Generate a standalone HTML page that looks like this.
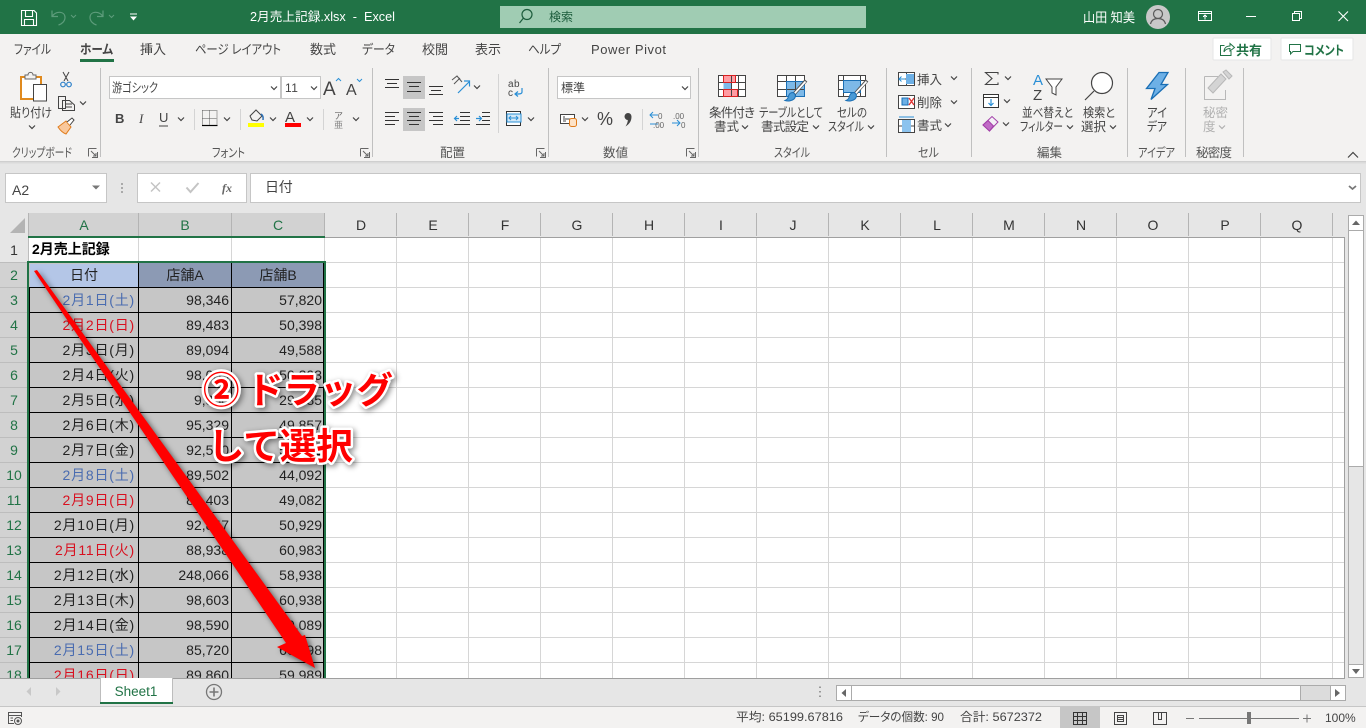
<!DOCTYPE html>
<html lang="ja"><head><meta charset="utf-8"><title>2月売上記録.xlsx - Excel</title>
<style>
html,body{margin:0;padding:0;background:#e6e6e6;overflow:hidden}
svg{display:block;position:absolute;left:0;top:0}
text{font-family:"Liberation Sans","Noto Sans CJK JP",sans-serif;font-size:12px;fill:#444}
.tab{font-size:13px;fill:#444;font-feature-settings:"palt"}
.lb{font-size:12.5px;fill:#444;font-feature-settings:"palt"}
.gl{font-size:12.5px;fill:#555;font-feature-settings:"palt"}
.ch{font-size:14px;fill:#333;text-anchor:middle}
.cs{font-size:14px;fill:#217346;text-anchor:middle}
.rh{font-size:14px;fill:#217346;text-anchor:middle}
.n{font-size:14px;fill:#222;text-anchor:end}
.d{font-size:14px;fill:#222;text-anchor:end;letter-spacing:.8px}
.b{fill:#4a6cb0}.r{fill:#d8101f}
.hd{font-size:14px;fill:#222;text-anchor:middle}
.st{font-size:12px;fill:#444;font-feature-settings:"palt"}
.big{font-size:36.5px;font-weight:700;fill:#f00;stroke:#fff;stroke-width:5px;paint-order:stroke;stroke-linejoin:round;font-family:"Noto Sans CJK JP","Liberation Sans",sans-serif}
.i{fill:none;stroke:#444;stroke-width:1}
.l{fill:none;stroke:#333;stroke-width:1;shape-rendering:crispEdges}
</style></head><body>
<svg width="1366" height="728" viewBox="0 0 1366 728" xmlns="http://www.w3.org/2000/svg">
<defs>
<path id="c" d="M-3-1.5 0 1.5 3-1.5" fill="none" stroke="#444" stroke-width="1.2"/>
<path id="dl" d="M-4.5-4.5H3.5M-4.5-4.5V3.5M-2-2 3 3M3 0V3H0M4.5-1V4.500H-1" fill="none" stroke="#666" stroke-width="1"/>
</defs>

<!-- sheet background -->
<rect x="0" y="0" width="1366" height="728" fill="#e6e6e6"/>
<rect x="29" y="237" width="1315" height="441" fill="#fff"/>

<!-- grid lines -->
<path d="M396.5 213V678M468.5 213V678M540.5 213V678M612.5 213V678M684.5 213V678M756.5 213V678M828.5 213V678M900.5 213V678M972.5 213V678M1044.5 213V678M1116.5 213V678M1188.5 213V678M1260.5 213V678M1332.5 213V678M325 262.5H1344M325 287.5H1344M325 312.5H1344M325 337.5H1344M325 362.5H1344M325 387.5H1344M325 412.5H1344M325 437.5H1344M325 462.5H1344M325 487.5H1344M325 512.5H1344M325 537.5H1344M325 562.5H1344M325 587.5H1344M325 612.5H1344M325 637.5H1344M325 662.5H1344M138.5 237V262M231.5 237V262M324.5 237V262" stroke="#d6d6d6" stroke-width="1" shape-rendering="crispEdges"/>

<!-- selected cells -->
<rect x="29" y="262" width="296" height="416" fill="#c6c6c6"/>
<rect x="30" y="264" width="109" height="23" fill="#b4c6e7"/>
<rect x="139" y="263" width="185" height="24" fill="#8c9ab4"/>
<path d="M29.5 287V678M138.5 263V678M231.5 263V678M323.5 263V678M29 287.5H324M29 312.5H324M29 337.5H324M29 362.5H324M29 387.5H324M29 412.5H324M29 437.5H324M29 462.5H324M29 487.5H324M29 512.5H324M29 537.5H324M29 562.5H324M29 587.5H324M29 612.5H324M29 637.5H324M29 662.5H324" stroke="#000" stroke-width="1" shape-rendering="crispEdges"/>

<!-- column headers -->
<rect x="0" y="213" width="1345" height="24" fill="#e6e6e6"/>
<rect x="29" y="213" width="296" height="24" fill="#d2d2d2"/>
<path d="M25 218V233H10Z" fill="#b4b4b4"/>
<path d="M28.5 213V237M138.5 213V236M231.5 213V236M324.5 213V236M396.5 213V236M468.5 213V236M540.5 213V236M612.5 213V236M684.5 213V236M756.5 213V236M828.5 213V236M900.5 213V236M972.5 213V236M1044.5 213V236M1116.5 213V236M1188.5 213V236M1260.5 213V236M1332.5 213V236" stroke="#b4b4b4" stroke-width="1" shape-rendering="crispEdges"/>
<path d="M325 237.5H1344.5V678M0 237.5H29" stroke="#a0a0a0" fill="none" stroke-width="1" shape-rendering="crispEdges"/>
<text class="cs" x="84" y="230">A</text><text class="cs" x="185" y="230">B</text><text class="cs" x="278" y="230">C</text>
<text class="ch" x="361" y="230">D</text><text class="ch" x="433" y="230">E</text><text class="ch" x="505" y="230">F</text><text class="ch" x="577" y="230">G</text><text class="ch" x="649" y="230">H</text><text class="ch" x="721" y="230">I</text><text class="ch" x="793" y="230">J</text><text class="ch" x="865" y="230">K</text><text class="ch" x="937" y="230">L</text><text class="ch" x="1009" y="230">M</text><text class="ch" x="1081" y="230">N</text><text class="ch" x="1153" y="230">O</text><text class="ch" x="1225" y="230">P</text><text class="ch" x="1297" y="230">Q</text>

<!-- row headers -->
<rect x="0" y="237" width="28" height="441" fill="#e6e6e6"/>
<rect x="0" y="262" width="28" height="416" fill="#d2d2d2"/>
<path d="M0 262.5H28M0 287.5H28M0 312.5H28M0 337.5H28M0 362.5H28M0 387.5H28M0 412.5H28M0 437.5H28M0 462.5H28M0 487.5H28M0 512.5H28M0 537.5H28M0 562.5H28M0 587.5H28M0 612.5H28M0 637.5H28M0 662.5H28M28.5 237V678" stroke="#bdbdbd" stroke-width="1" shape-rendering="crispEdges"/>
<text class="ch" x="14" y="255">1</text>
<text class="rh" x="14" y="280">2</text><text class="rh" x="14" y="305">3</text><text class="rh" x="14" y="330">4</text><text class="rh" x="14" y="355">5</text><text class="rh" x="14" y="380">6</text><text class="rh" x="14" y="405">7</text><text class="rh" x="14" y="430">8</text><text class="rh" x="14" y="455">9</text><text class="rh" x="14" y="480">10</text><text class="rh" x="14" y="505">11</text><text class="rh" x="14" y="530">12</text><text class="rh" x="14" y="555">13</text><text class="rh" x="14" y="580">14</text><text class="rh" x="14" y="605">15</text><text class="rh" x="14" y="630">16</text><text class="rh" x="14" y="655">17</text><text class="rh" x="14" y="680">18</text>

<!-- cells -->
<text x="32" y="254" style="font-size:14px;font-weight:700;fill:#000">2月売上記録</text>
<text class="hd" x="84" y="280">日付</text><text class="hd" x="185" y="280">店舗A</text><text class="hd" x="278" y="280">店舗B</text>

<text class="d b" x="135" y="305">2月1日(土)</text><text class="n" x="229" y="305">98,346</text><text class="n" x="322" y="305">57,820</text>
<text class="d r" x="135" y="330">2月2日(日)</text><text class="n" x="229" y="330">89,483</text><text class="n" x="322" y="330">50,398</text>
<text class="d" x="135" y="355">2月3日(月)</text><text class="n" x="229" y="355">89,094</text><text class="n" x="322" y="355">49,588</text>
<text class="d" x="135" y="380">2月4日(火)</text><text class="n" x="229" y="380">98,053</text><text class="n" x="322" y="380">50,203</text>
<text class="d" x="135" y="405">2月5日(水)</text><text class="n" x="229" y="405">9,830</text><text class="n" x="322" y="405">29,385</text>
<text class="d" x="135" y="430">2月6日(木)</text><text class="n" x="229" y="430">95,329</text><text class="n" x="322" y="430">49,857</text>
<text class="d" x="135" y="455">2月7日(金)</text><text class="n" x="229" y="455">92,530</text><text class="n" x="322" y="455">50,392</text>
<text class="d b" x="135" y="480">2月8日(土)</text><text class="n" x="229" y="480">89,502</text><text class="n" x="322" y="480">44,092</text>
<text class="d r" x="135" y="505">2月9日(日)</text><text class="n" x="229" y="505">89,403</text><text class="n" x="322" y="505">49,082</text>
<text class="d" x="135" y="530">2月10日(月)</text><text class="n" x="229" y="530">92,847</text><text class="n" x="322" y="530">50,929</text>
<text class="d r" x="135" y="555">2月11日(火)</text><text class="n" x="229" y="555">88,938</text><text class="n" x="322" y="555">60,983</text>
<text class="d" x="135" y="580">2月12日(水)</text><text class="n" x="229" y="580">248,066</text><text class="n" x="322" y="580">58,938</text>
<text class="d" x="135" y="605">2月13日(木)</text><text class="n" x="229" y="605">98,603</text><text class="n" x="322" y="605">60,938</text>
<text class="d" x="135" y="630">2月14日(金)</text><text class="n" x="229" y="630">98,590</text><text class="n" x="322" y="630">60,089</text>
<text class="d b" x="135" y="655">2月15日(土)</text><text class="n" x="229" y="655">85,720</text><text class="n" x="322" y="655">60,398</text>
<text class="d r" x="135" y="680">2月16日(日)</text><text class="n" x="229" y="680">89,860</text><text class="n" x="322" y="680">59,989</text>

<!-- selection outline -->
<path d="M28 237H325" stroke="#217346" stroke-width="2"/>
<path d="M28 262H325M28 261V678M325 261V678" stroke="#217346" stroke-width="2" fill="none"/>

<!-- annotation arrow -->
<polygon points="34,271 37,270 302,636 305,635 315,668 277,647 286,643" fill="#f00" style="filter:drop-shadow(3px 3px 3px rgba(0,0,0,.55))"/>
<g style="filter:drop-shadow(2px 2px 3px rgba(0,0,0,.45))">
<text class="big" x="203" y="403">②</text>
<text class="big" x="247" y="403">ドラッグ</text>
<text class="big" x="208" y="459">して選択</text>
</g>

<!-- bottom chrome -->
<rect x="0" y="678" width="1366" height="28" fill="#e6e6e6"/>
<path d="M0 678.5H1345" stroke="#9f9f9f" shape-rendering="crispEdges"/>
<rect x="100" y="678" width="73" height="25" fill="#fff"/>
<path d="M100.5 678V703M172.5 678V703" stroke="#bdbdbd" shape-rendering="crispEdges"/>
<rect x="100" y="702" width="73" height="2" fill="#217346"/>
<text x="136" y="696" text-anchor="middle" style="font-size:13.500px;fill:#217346">Sheet1</text>
<path d="M31 687V696L26.500 691.500Z" fill="#c8c8c8"/><path d="M56 687V696L60.500 691.500Z" fill="#c8c8c8"/>
<circle cx="214" cy="692" r="7.500" fill="none" stroke="#777" stroke-width="1.300"/><path d="M209.500 692H218.500M214 687.500V696.500" stroke="#777" stroke-width="1.600"/>
<path d="M820 686.500V688M820 691V692.500M820 695.500V697" stroke="#999" stroke-width="2"/>
<rect x="836.500" y="685.500" width="509" height="15" fill="#dcdcdc" stroke="#ababab" shape-rendering="crispEdges"/>
<rect x="851" y="686" width="449" height="14" fill="#fff"/>
<path d="M851.500 686V700M1300.500 686V700" stroke="#ababab" shape-rendering="crispEdges"/>
<rect x="837" y="686" width="14" height="14" fill="#fff"/><rect x="1330" y="686" width="15" height="14" fill="#fff"/><path d="M1330.500 686V700" stroke="#ababab" shape-rendering="crispEdges"/>
<path d="M846 689V697L841.500 693Z" fill="#666"/><path d="M1335 689V697L1340 693Z" fill="#666"/>

<!-- vertical scrollbar -->
<rect x="1348.500" y="215.500" width="15" height="462" fill="#e6e6e6" stroke="#ababab" shape-rendering="crispEdges"/>
<rect x="1349" y="216" width="14" height="14" fill="#fff"/>
<rect x="1349" y="231" width="14" height="235" fill="#fff"/>
<rect x="1349" y="665" width="14" height="12" fill="#fff"/>
<path d="M1349 230.500H1363M1349 466.500H1363M1349 664.500H1363" stroke="#ababab" shape-rendering="crispEdges"/>
<path d="M1352 225 1356 220.500 1360 225Z" fill="#666"/><path d="M1352 669 1356 674 1360 669Z" fill="#666"/>

<!-- status bar -->
<rect x="0" y="707" width="1366" height="21" fill="#f3f2f1"/>
<path d="M0 706.500H1366" stroke="#c6c6c6" shape-rendering="crispEdges"/>
<path d="M8.500 712.500H21.500V715.500H8.500ZM8.500 715.500V723.500H14M21.500 715.500V717M10.500 718H13M10.500 720.500H13" fill="none" stroke="#555" shape-rendering="crispEdges"/><circle cx="18" cy="721" r="3.500" fill="none" stroke="#555"/><circle cx="18" cy="721" r="1.500" fill="#555"/>
<text class="st" x="736" y="721" textLength="107" lengthAdjust="spacingAndGlyphs">平均: 65199.67816</text>
<text class="st" x="858" y="721" textLength="86" lengthAdjust="spacingAndGlyphs">データの個数: 90</text>
<text class="st" x="960" y="721" textLength="82" lengthAdjust="spacingAndGlyphs">合計: 5672372</text>
<rect x="1060" y="707" width="40" height="21" fill="#c6c6c6"/>
<path d="M1073.500 712.500H1086.500V724.500H1073.500ZM1073.500 716.500H1086.500M1073.500 720.500H1086.500M1077.500 712.500V724.500M1082.500 712.500V724.500" fill="none" stroke="#333" shape-rendering="crispEdges"/>
<path d="M1114.500 712.500H1126.500V724.500H1114.500ZM1117.500 715.500H1123.500V721.500H1117.500ZM1118 717.500H1123M1118 719.500H1123" fill="none" stroke="#444" shape-rendering="crispEdges"/>
<path d="M1153.500 712.500H1166.500V724.500H1153.500ZM1158.500 712.500V719.500H1161.500V712.500" fill="none" stroke="#444" shape-rendering="crispEdges"/>
<path d="M1186 718.500H1194M1199 718.500H1299M1303 718.500H1311M1307 714.500V722.500" stroke="#777" shape-rendering="crispEdges"/>
<rect x="1247" y="712" width="4" height="12" fill="#777"/>
<text class="st" x="1325" y="722">100%</text>

<!-- ribbon -->
<rect x="0" y="34" width="1366" height="127" fill="#f3f2f1"/>
<rect x="0" y="161" width="1366" height="1" fill="#cfcfcf"/><rect x="0" y="162" width="1366" height="1" fill="#dadada"/><rect x="0" y="163" width="1366" height="1" fill="#e0e0e0"/>

<!-- title bar -->
<rect x="0" y="0" width="1366" height="34" fill="#217346"/>
<path d="M21.500 10.500H34L36.500 13V25.500H21.500ZM25.500 10.500V16.500H32.500V10.500M24.500 25.500V19.500H33.500V25.500" fill="none" stroke="#fff" stroke-width="1.100"/>
<path d="M52 10.500V16.500H58M52 16.500C56 10.500 65 11 65 17.500C65 21 62 24 58.500 25" fill="none" stroke="#5d9c7b" stroke-width="1.200"/>
<path d="M103 10.500V16.500H97M103 16.500C99 10.500 90 11 90 17.500C90 21 93 24 96.500 25" fill="none" stroke="#5d9c7b" stroke-width="1.200"/>
<path d="M71 15 73.500 17.500 76 15M109 15 111.500 17.500 114 15" fill="none" stroke="#5d9c7b"/>
<path d="M130 14H137" stroke="#fff"/><path d="M130 16.500H137L133.500 20.500Z" fill="#fff"/>
<text x="250" y="21" textLength="145" lengthAdjust="spacingAndGlyphs" style="font-size:12.500px;fill:#fff">2月売上記録.xlsx&#160;&#160;-&#160;&#160;Excel</text>
<rect x="500" y="6" width="366" height="22" fill="#a0ccb3"/>
<circle cx="527" cy="14.500" r="5" fill="none" stroke="#1c5c3c" stroke-width="1.200"/><path d="M523.500 18 519.500 23" stroke="#1c5c3c" stroke-width="1.200"/>
<text x="549" y="21" style="fill:#1c5c3c">検索</text>
<text x="1083" y="22" textLength="52" lengthAdjust="spacingAndGlyphs" style="font-size:13px;fill:#fff">山田 知美</text>
<circle cx="1158" cy="17" r="12" fill="#c8c8c8"/><circle cx="1158" cy="14" r="4.500" fill="none" stroke="#5a5a5a" stroke-width="1.200"/><path d="M1150.500 24C1151.500 19.500 1155 18.500 1158 18.500S1164.500 19.500 1165.500 24" fill="none" stroke="#5a5a5a" stroke-width="1.200"/>
<path d="M1198.500 11.500H1211.500V20.500H1198.500ZM1198.500 13.500H1211.500M1205 19.500V15M1203 17 1205 15 1207 17" fill="none" stroke="#fff" shape-rendering="crispEdges"/>
<path d="M1246 16.500H1256" stroke="#fff" shape-rendering="crispEdges"/>
<path d="M1292.500 13.500H1299.500V20.500H1292.500ZM1294.500 13.500V11.500H1301.500V18.500H1299.500" fill="none" stroke="#fff" shape-rendering="crispEdges"/>
<path d="M1338.500 11.500 1348 21M1348 11.500 1338.500 21" stroke="#fff" stroke-width="1.100"/>

<!-- tabs -->
<text class="tab" x="14" y="54" textLength="37" lengthAdjust="spacingAndGlyphs">ファイル</text>
<text class="tab" x="80" y="54" textLength="33" lengthAdjust="spacingAndGlyphs" style="font-weight:700">ホーム</text>
<rect x="80" y="59" width="34" height="3" fill="#217346"/>
<text class="tab" x="140" y="54" textLength="26">挿入</text>
<text class="tab" x="195" y="54" textLength="86" lengthAdjust="spacingAndGlyphs">ページ レイアウト</text>
<text class="tab" x="310" y="54" textLength="26">数式</text>
<text class="tab" x="362" y="54" textLength="33" lengthAdjust="spacingAndGlyphs">データ</text>
<text class="tab" x="422" y="54" textLength="26">校閲</text>
<text class="tab" x="475" y="54" textLength="26">表示</text>
<text class="tab" x="528" y="54" textLength="33" lengthAdjust="spacingAndGlyphs">ヘルプ</text>
<text class="tab" x="591" y="54" textLength="75">Power Pivot</text>

<!-- share/comment -->
<rect x="1213" y="38" width="58" height="22" rx="1" fill="#fff" stroke="#e6e6e6"/>
<path d="M1224.500 45.500H1220.500V55.500H1231V51M1224 52C1224 47.500 1227 46 1230 46V43.500L1234.500 47.500 1230 51V48.500C1228 48.500 1225.500 49 1224 52" fill="none" stroke="#217346"/>
<text x="1236" y="55" style="font-size:13px;font-weight:700;fill:#217346">共有</text>
<rect x="1281" y="38" width="72" height="22" rx="1" fill="#fff" stroke="#e6e6e6"/>
<path d="M1289.500 44.500H1300.500V51.500H1293L1290.500 54V51.500H1289.500Z" fill="none" stroke="#217346"/>
<text x="1304" y="55" textLength="40" lengthAdjust="spacingAndGlyphs" style="font-size:13px;font-weight:700;fill:#217346;font-feature-settings:'palt'">コメント</text>

<!-- separators -->
<path d="M100.500 68V157M372.500 68V157M548.500 68V157M698.500 68V157M886.500 68V157M971.500 68V157M1127.500 68V157M1185.500 68V157M1243.500 68V157" stroke="#c0c0c0" shape-rendering="crispEdges"/>
<path d="M194.500 109V130M240.500 109V130M323.500 109V130M498.500 74V133M642.500 109V130" stroke="#d4d4d4" shape-rendering="crispEdges"/>

<!-- group labels -->
<text class="gl" x="12" y="157" textLength="60" lengthAdjust="spacingAndGlyphs">クリップボード</text>
<text class="gl" x="212" y="157" textLength="33" lengthAdjust="spacingAndGlyphs">フォント</text>
<text class="gl" x="440" y="157">配置</text>
<text class="gl" x="603" y="157">数値</text>
<text class="gl" x="774" y="157" textLength="36" lengthAdjust="spacingAndGlyphs">スタイル</text>
<text class="gl" x="918" y="157" textLength="21" lengthAdjust="spacingAndGlyphs">セル</text>
<text class="gl" x="1037" y="157">編集</text>
<text class="gl" x="1138" y="157" textLength="37" lengthAdjust="spacingAndGlyphs">アイデア</text>
<text class="gl" x="1196" y="157" textLength="36">秘密度</text>
<use href="#dl" x="93" y="153"/><use href="#dl" x="365" y="153"/><use href="#dl" x="541" y="153"/><use href="#dl" x="691" y="153"/>
<path d="M1348 157.500 1353 152.500 1358 157.500" fill="none" stroke="#444" stroke-width="1.200"/>

<!-- clipboard -->
<rect x="21" y="77" width="20" height="22" fill="#fff" stroke="#e08a1e" stroke-width="2"/>
<path d="M25 79V75H28C28 71.500 33 71.500 33 75H36V79Z" fill="#f3f2f1" stroke="#666"/>
<rect x="33.500" y="84.500" width="13" height="16.500" fill="#fff" stroke="#444"/>
<text class="lb" x="10" y="117" textLength="42" lengthAdjust="spacingAndGlyphs">貼り付け</text>
<use href="#c" x="32" y="127"/>
<path d="M63 72 68 81M69 72 64 81" stroke="#444" fill="none"/><circle cx="63" cy="84.500" r="2.300" fill="none" stroke="#2a7fc9" stroke-width="1.200"/><circle cx="69" cy="84.500" r="2.300" fill="none" stroke="#2a7fc9" stroke-width="1.200"/>
<path d="M58.500 96.500H65.500V108.500H58.500ZM62.500 100.500H69.500L74.500 105V110.500H62.500ZM65 104H72M65 107H72" fill="#f3f2f1" stroke="#444"/>
<use href="#c" x="83" y="103"/>
<path d="M58 127 66 121 71 127 66 134C63 133 60 130 58 127Z" fill="#f9c89c" stroke="#e07b1a"/><path d="M67 122 72 118 74 120 70 125" fill="#fff" stroke="#444"/>

<!-- font -->
<rect x="109.500" y="76.500" width="171" height="22" fill="#fff" stroke="#c6c6c6" shape-rendering="crispEdges"/>
<rect x="281.500" y="76.500" width="39" height="22" fill="#fff" stroke="#c6c6c6" shape-rendering="crispEdges"/>
<text x="112" y="92" textLength="46" lengthAdjust="spacingAndGlyphs" style="font-size:12.500px;fill:#444;font-feature-settings:'palt'">游ゴシック</text>
<text x="285" y="92" style="font-size:12px;letter-spacing:.5px">11</text>
<use href="#c" x="274" y="88"/><use href="#c" x="314" y="88"/>
<text x="323" y="95" style="font-size:19px;fill:#444">A</text><path d="M336 81 338.500 78.500 341 81" fill="none" stroke="#2a8fd6"/>
<text x="346" y="95" style="font-size:16px;fill:#444">A</text><path d="M357 79 359.500 81.500 362 79" fill="none" stroke="#2a8fd6"/>
<text x="115" y="123" style="font-size:13px;font-weight:700;fill:#444">B</text>
<text x="139" y="123" style="font-size:13px;font-style:italic;font-family:'Liberation Serif',serif;fill:#444">I</text>
<text x="159" y="122" style="font-size:13px;fill:#444">U</text><path d="M159 126H168" stroke="#444"/>
<use href="#c" x="181" y="119"/>
<path d="M202.500 110.500H217M202.500 118.500H217M209.500 110.500V125M202.500 110.500V125M217 110.500V125" fill="none" stroke="#555" stroke-dasharray="1 1" shape-rendering="crispEdges"/><path d="M202 125.500H217.500" stroke="#000" stroke-width="1.200"/>
<use href="#c" x="227" y="119"/>
<path d="M250 116 256 110 262 116 257 121 252 120Z" fill="none" stroke="#444"/><path d="M261 114C264 116 263 119 263 120" fill="none" stroke="#2a6fb5" stroke-width="1.500"/>
<rect x="248" y="123" width="16" height="4" fill="#ff0"/>
<use href="#c" x="273" y="119"/>
<text x="285" y="122" style="font-size:15px;fill:#444">A</text><rect x="285" y="123" width="16" height="4" fill="#f00"/>
<use href="#c" x="310" y="119"/>
<text x="334" y="119" style="font-size:9px;fill:#666">ア</text><text x="334" y="128" style="font-size:9px;fill:#888">亜</text>
<use href="#c" x="356" y="119"/>

<!-- alignment -->
<rect x="403" y="76" width="22" height="23" fill="#c6c6c6"/><rect x="403" y="108" width="22" height="23" fill="#c6c6c6"/>
<path class="l" d="M385 79.500H399M387 83.500H397M385 87.500H399M407 82.500H421M409 86.500H419M407 91.500H421M429 86.500H443M431 90.500H441M429 94.500H443M385 112.500H399M385 116.500H395M385 120.500H399M385 124.500H395M407 112.500H421M409 116.500H419M407 120.500H421M409 124.500H419M429 112.500H443M433 116.500H443M429 120.500H443M433 124.500H443"/>
<path d="M454 84 460 78M452 80 457 76 462 82" stroke="#555" fill="none"/><path d="M458 93 469 82M464 81H469.500V86.500" stroke="#2a8fd6" stroke-width="1.200" fill="none"/>
<use href="#c" x="477" y="87"/>
<path class="l" d="M460 112.500H470M460 116.500H470M460 120.500H470M454 124.500H470M482 112.500H490M482 116.500H490M482 120.500H490M476 124.500H490M476 112.500V112.500"/>
<path d="M459 118.500H454.500M457 116 454.500 118.500 457 121M476 118.500H481M479 116 481.500 118.500 479 121" stroke="#2a8fd6" stroke-width="1.200" fill="none"/>
<text x="508" y="87" style="font-size:10px;letter-spacing:.5px;fill:#444">ab</text><text x="508" y="96" style="font-size:10px;fill:#444">c</text>
<path d="M522 88V92C522 94 520 94 515 94M518 91.500 515 94 518 96.500" stroke="#2a8fd6" stroke-width="1.200" fill="none"/>
<rect x="506.500" y="111.500" width="14" height="14" fill="#fff" stroke="#333"/><rect x="507" y="114" width="14" height="8" fill="#d3e8f7" stroke="#2a8fd6"/><path d="M509 118H518M511 116 509 118 511 120M516 116 518 118 516 120" stroke="#2a8fd6" fill="none"/>
<use href="#c" x="531" y="119"/>

<!-- number -->
<rect x="557.500" y="76.500" width="133" height="22" fill="#fff" stroke="#c6c6c6" shape-rendering="crispEdges"/>
<text x="561" y="92" style="fill:#444">標準</text>
<use href="#c" x="685" y="88"/>
<rect x="560.500" y="114.500" width="14" height="9" fill="#fff" stroke="#444"/><path d="M563 117H565M563 119H572M563 121H566" stroke="#444" shape-rendering="crispEdges"/>
<rect x="569.500" y="118.500" width="7" height="8" rx="2" fill="#fde3c8" stroke="#e07b1a"/>
<use href="#c" x="585" y="119"/>
<text x="597" y="125" style="font-size:18px;fill:#444">%</text>
<path d="M631.500 116.500C631.500 121 629.500 124 625.500 126.500C627 124 627.800 122 627.800 120A3.500 3.500 0 1 1 631.500 116.500Z" fill="#444"/>
<path d="M650 115H658M653 112 650 115 653 118M658 124H650" stroke="#2a8fd6" fill="none"/>
<text x="658" y="119" style="font-size:8px;fill:#666">0</text><text x="653" y="128" style="font-size:8px;fill:#666">.00</text>
<text x="673" y="119" style="font-size:8px;fill:#666">.00</text>
<path d="M672 123H680M677 120 680 123 677 126" stroke="#2a8fd6" fill="none"/><text x="681" y="128" style="font-size:8px;fill:#666">0</text>

<!-- conditional format -->
<rect x="718.500" y="75.500" width="27" height="21" fill="#fff"/>
<rect x="723.500" y="75.500" width="12" height="7" fill="#ff9ca3"/><rect x="723.500" y="89.500" width="14" height="7" fill="#ff9ca3"/><rect x="723.500" y="82.500" width="8" height="7" fill="#7db9e8"/>
<path d="M718.500 75.500H745.500V96.500H718.500ZM718.500 82.500H745.500M718.500 89.500H745.500M731.500 75.500V96.500M738.500 75.500V96.500" fill="none" stroke="#444" shape-rendering="crispEdges"/>
<path d="M723.500 75.500H735.500V82.500H723.500ZM723.500 89.500H737.500V96.500H723.500Z" fill="none" stroke="#d82020" shape-rendering="crispEdges"/>
<text class="lb" x="709" y="117" textLength="46">条件付き</text>
<text class="lb" x="714" y="131">書式</text><use href="#c" x="745" y="127"/>
<!-- table format -->
<rect x="777.500" y="75.500" width="27" height="21" fill="#fff"/>
<rect x="786.500" y="81.500" width="18" height="15" fill="#7db9e8"/>
<path d="M777.500 75.500H804.500V96.500H777.500ZM777.500 81.500H804.500M777.500 89.500H804.500M786.500 75.500V96.500M795.500 75.500V96.500" fill="none" stroke="#444" shape-rendering="crispEdges"/>
<path d="M786.500 81.500H804.500V96.500H786.500Z" fill="none" stroke="#1a6fb5" shape-rendering="crispEdges"/>
<path d="M806 80.500 794 94" stroke="#555" stroke-width="3.500"/><path d="M805.500 81.500 794.500 93.500" stroke="#fff" stroke-width="1.700"/>
<path d="M793 92.500C796 94 796 97 794 99C792 101 788 101.500 785 100.500C787.500 99.500 788 98 788.500 96S790.500 92.500 793 92.500Z" fill="#4a9ad6" stroke="#1a6fb5"/>
<text class="lb" x="759" y="117" textLength="64" lengthAdjust="spacingAndGlyphs">テーブルとして</text>
<text class="lb" x="761" y="131" textLength="48">書式設定</text><use href="#c" x="816" y="127"/>
<!-- cell style -->
<rect x="838.500" y="75.500" width="27" height="21" fill="#fff"/>
<path d="M838.500 75.500H865.500V96.500H838.500ZM838.500 80.500H865.500M838.500 89.500H843.500M843.500 75.500V96.500M860.500 75.500V96.500" fill="none" stroke="#444" shape-rendering="crispEdges"/>
<rect x="843.500" y="80.500" width="17" height="12" fill="#7db9e8" stroke="#1a6fb5" shape-rendering="crispEdges"/>
<path d="M867 80.500 855 94" stroke="#555" stroke-width="3.500"/><path d="M866.500 81.500 855.500 93.500" stroke="#fff" stroke-width="1.700"/>
<path d="M854 92.500C857 94 857 97 855 99C853 101 849 101.500 846 100.500C848.500 99.500 849 98 849.500 96S851.500 92.500 854 92.500Z" fill="#4a9ad6" stroke="#1a6fb5"/>
<text class="lb" x="837" y="117" textLength="30" lengthAdjust="spacingAndGlyphs">セルの</text>
<text class="lb" x="828" y="131" textLength="36" lengthAdjust="spacingAndGlyphs">スタイル</text><use href="#c" x="871" y="127"/>

<!-- cells -->
<path d="M898.500 72.500H914.500V85.500H898.500ZM898.500 79H914.500M906.500 72.500V85.500" fill="#fff" stroke="#444" shape-rendering="crispEdges"/><rect x="906" y="74" width="8" height="10" fill="#6db0e6"/><path d="M905 79H899M901.500 76.500 899 79 901.500 81.500" stroke="#2a8fd6" fill="none"/>
<path d="M898.500 95.500H914.500V108.500H898.500Z" fill="#fff" stroke="#444" shape-rendering="crispEdges"/><rect x="902" y="98" width="6" height="7" fill="#6db0e6" stroke="#1a6fb5"/><path d="M909 98 914 105M914 98 909 105" stroke="#e03030" stroke-width="1.300"/>
<path d="M898.500 119.500H914.500V132.500H898.500ZM898.500 126H914.500M906.500 119.500V132.500" fill="#fff" stroke="#444" shape-rendering="crispEdges"/><rect x="902" y="120" width="9" height="12" fill="#8cc3ee"/><path d="M899 117H914" stroke="#2a8fd6"/>
<text class="lb" x="917" y="84">挿入</text><use href="#c" x="954" y="78"/>
<text class="lb" x="917" y="107">削除</text><use href="#c" x="954" y="102"/>
<text class="lb" x="917" y="130">書式</text><use href="#c" x="948" y="125"/>

<!-- editing -->
<path d="M998 74.500V72.500H985.500L992 78.500 985.500 84.500H998V82.500" fill="none" stroke="#444" stroke-width="1.100"/><use href="#c" x="1008" y="78"/>
<rect x="983.500" y="94.500" width="15" height="13" fill="#fff" stroke="#333"/><path d="M983.500 97.500H998.500" stroke="#333"/><path d="M991 99V105M988.500 103 991 105.500 993.500 103" stroke="#2a8fd6" stroke-width="1.200" fill="none"/><use href="#c" x="1007" y="101"/>
<path d="M983 125 992 116.500 998 122 989.500 131Z" fill="#f4f0f6" stroke="#a23fa8"/><path d="M983 125 988 120.500 993.500 126 989.500 131Z" fill="#c06bc6" stroke="#a23fa8"/><use href="#c" x="1006" y="124"/>
<text x="1033" y="85" style="font-size:15px;fill:#2a8fd6">A</text><text x="1033" y="100" style="font-size:15px;fill:#444">Z</text>
<path d="M1046 79H1062L1056 87V95L1052 93V87Z" fill="#fff" stroke="#444"/>
<text class="lb" x="1022" y="117" textLength="51" lengthAdjust="spacingAndGlyphs">並べ替えと</text>
<text class="lb" x="1020" y="131" textLength="43" lengthAdjust="spacingAndGlyphs">フィルター</text><use href="#c" x="1070" y="127"/>
<circle cx="1102" cy="83" r="10.500" fill="#fff" stroke="#444" stroke-width="1.200"/><path d="M1094 91 1085 100" stroke="#444" stroke-width="1.200"/>
<text class="lb" x="1083" y="117" textLength="32" lengthAdjust="spacingAndGlyphs">検索と</text>
<text class="lb" x="1081" y="131">選択</text><use href="#c" x="1113" y="127"/>

<!-- ideas -->
<path d="M1159 72.500H1168L1161 84.500H1167.500L1151 99.500 1155 88.500H1146.500Z" fill="#6db0e6" stroke="#1a6fb5" stroke-width="1.300"/>
<text class="lb" x="1147" y="117" textLength="20" lengthAdjust="spacingAndGlyphs">アイ</text>
<text class="lb" x="1147" y="131" textLength="20" lengthAdjust="spacingAndGlyphs">デア</text>

<!-- sensitivity -->
<path d="M1204.500 76.500H1218M1204.500 76.500V99.500H1225.500V90" fill="#f3f2f1" stroke="#b8b8b8"/>
<path d="M1208 88 1221 74 1226 79 1213 93Z" fill="#d4d4d4" stroke="#b8b8b8"/><path d="M1223 72 1226 70 1232 76 1229 79Z" fill="#d4d4d4" stroke="#b8b8b8"/>
<text x="1203" y="117" style="font-size:12.500px;fill:#b0b0b0">秘密</text>
<text x="1203" y="131" style="font-size:12.500px;fill:#b0b0b0">度</text><path d="M1219 125.500 1222 128.500 1225 125.500" fill="none" stroke="#b0b0b0" stroke-width="1.200"/>

<!-- formula bar -->
<rect x="5.500" y="173.500" width="101" height="29" fill="#fff" stroke="#c6c6c6" shape-rendering="crispEdges"/>
<text x="12" y="195" style="font-size:14px;fill:#444">A2</text>
<path d="M92 185.500H100L96 189.500Z" fill="#777"/>
<path d="M122 183V185M122 187V189M122 191V193" stroke="#aaa" stroke-width="2"/>
<rect x="137.500" y="173.500" width="109" height="29" fill="#fff" stroke="#c6c6c6" shape-rendering="crispEdges"/>
<path d="M151 182.500 160 191.500M160 182.500 151 191.500" stroke="#c4c4c4" stroke-width="1.500"/>
<path d="M186.500 187.500 190.500 192 198.500 183" fill="none" stroke="#c4c4c4" stroke-width="2"/>
<text x="222" y="192" style="font-size:12px;font-weight:700;font-style:italic;font-family:'Liberation Serif',serif;fill:#666">fx</text>
<rect x="250.500" y="173.500" width="1110" height="29" fill="#fff" stroke="#c6c6c6" shape-rendering="crispEdges"/>
<text x="265" y="192" style="font-size:14px;letter-spacing:-.2px;fill:#444">日付</text>
<path d="M1349 186 1352.500 189 1356 186" fill="none" stroke="#777" stroke-width="1.800"/>
</svg>
</body></html>
